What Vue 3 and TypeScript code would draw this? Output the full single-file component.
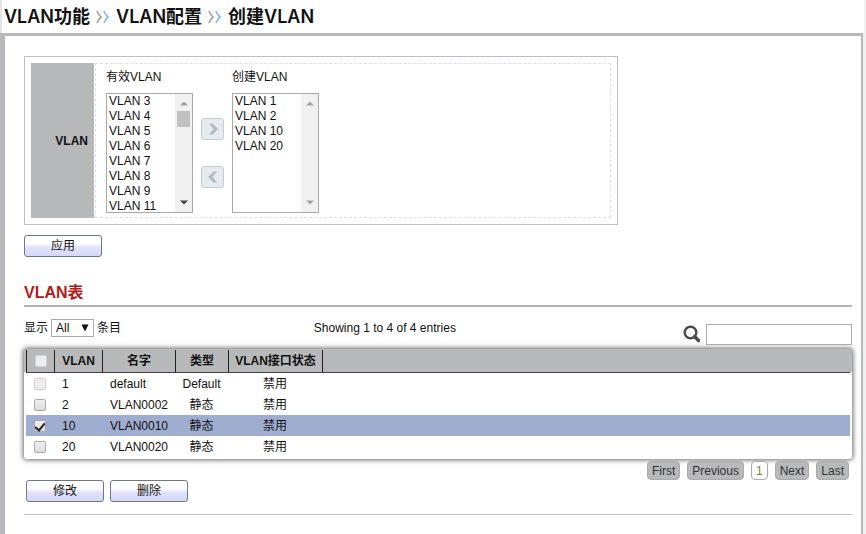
<script setup lang="ts">
import { computed, ref } from 'vue'

interface VlanRow {
  id: number
  name: string
  type: string
  state: string
  locked?: boolean
}

const crumbs = ['VLAN功能', 'VLAN配置', '创建VLAN']

const available = ref<number[]>([3, 4, 5, 6, 7, 8, 9, 11, 12, 13, 14, 15, 16, 17, 18, 19])
const created = ref<number[]>([1, 2, 10, 20])
const pickAvailable = ref<number[]>([])
const pickCreated = ref<number[]>([])

const rows: VlanRow[] = [
  { id: 1, name: 'default', type: 'Default', state: '禁用', locked: true },
  { id: 2, name: 'VLAN0002', type: '静态', state: '禁用' },
  { id: 10, name: 'VLAN0010', type: '静态', state: '禁用' },
  { id: 20, name: 'VLAN0020', type: '静态', state: '禁用' },
]
const checked = ref<number[]>([10])
const keyword = ref('')
const pageSize = ref('All')

const visibleRows = computed(() =>
  rows.filter((r) => `${r.id} ${r.name} ${r.type} ${r.state}`.includes(keyword.value)),
)

const byNumber = (a: number, b: number) => a - b

function addVlans() {
  created.value = [...created.value, ...pickAvailable.value].sort(byNumber)
  available.value = available.value.filter((v) => !pickAvailable.value.includes(v))
  pickAvailable.value = []
}

function removeVlans() {
  available.value = [...available.value, ...pickCreated.value].sort(byNumber)
  created.value = created.value.filter((v) => !pickCreated.value.includes(v))
  pickCreated.value = []
}
</script>

<template>
  <div class="page">
    <header class="crumbs">
      <template v-for="(crumb, i) in crumbs" :key="crumb">
        <svg v-if="i > 0" class="crumb-sep" viewBox="0 0 14 14" aria-hidden="true">
          <path d="M1 1 Q2 4 5 7 Q2 10 1 13" stroke="#a9a9a9" />
          <path d="M8 1 Q9 4 12 7 Q9 10 8 13" stroke="#8dbbf0" />
        </svg>
        <span>{{ crumb }}</span>
      </template>
    </header>

    <main class="content">
      <section class="form-box">
        <div class="form-label">VLAN</div>
        <div class="form-field">
          <div class="list-group">
            <label for="available">有效VLAN</label>
            <div class="list-frame">
              <select id="available" v-model="pickAvailable" multiple>
                <option v-for="v in available" :key="v" :value="v">VLAN {{ v }}</option>
              </select>
              <div class="scrollbar" aria-hidden="true">
                <svg viewBox="0 0 8 5"><path d="M0 4.5 4 0.5 8 4.5z" fill="#a3a3a3" /></svg>
                <span class="thumb"></span>
                <svg viewBox="0 0 8 5"><path d="M0 0.5 4 4.5 8 0.5z" fill="#404040" /></svg>
              </div>
            </div>
          </div>

          <div class="movers">
            <button type="button" aria-label="添加" @click="addVlans">
              <svg viewBox="0 0 12 12"><path d="M2 0.5h3.5l5.5 5.5-5.5 5.5H2L6.5 6z" fill="#b0bcc3" /></svg>
            </button>
            <button type="button" aria-label="移除" @click="removeVlans">
              <svg viewBox="0 0 12 12"><path d="M10 0.5H6.5L1 6l5.5 5.5H10L5.5 6z" fill="#b0bcc3" /></svg>
            </button>
          </div>

          <div class="list-group">
            <label for="created">创建VLAN</label>
            <div class="list-frame">
              <select id="created" v-model="pickCreated" multiple>
                <option v-for="v in created" :key="v" :value="v">VLAN {{ v }}</option>
              </select>
              <div class="scrollbar" aria-hidden="true">
                <svg viewBox="0 0 8 5"><path d="M0 4.5 4 0.5 8 4.5z" fill="#a3a3a3" /></svg>
                <svg viewBox="0 0 8 5"><path d="M0 0.5 4 4.5 8 0.5z" fill="#a3a3a3" /></svg>
              </div>
            </div>
          </div>
        </div>
      </section>

      <button type="button" class="btn">应用</button>

      <h2>VLAN表</h2>

      <div class="toolbar">
        <label class="page-size">
          显示
          <span class="size-select">
            <select v-model="pageSize">
              <option>All</option>
              <option>10</option>
              <option>50</option>
            </select>
            <svg viewBox="0 0 8 8" aria-hidden="true"><path d="M0.5 0.5h7L4 7.5z" fill="#111" /></svg>
          </span>
          条目
        </label>
        <span class="summary">Showing 1 to 4 of 4 entries</span>
        <label class="search">
          <svg viewBox="0 0 18 18" role="img" aria-label="搜索">
            <circle cx="7.5" cy="7.5" r="5.8" fill="none" stroke="#4a4a4a" stroke-width="2.4" />
            <path d="M11.5 11.5 15.5 15.5" stroke="#4a4a4a" stroke-width="3.4" stroke-linecap="round" />
          </svg>
          <input v-model="keyword" type="text" />
        </label>
      </div>

      <div class="table-wrap">
        <table>
          <colgroup>
            <col class="c-check" />
            <col class="c-id" />
            <col class="c-name" />
            <col class="c-type" />
            <col class="c-state" />
            <col />
          </colgroup>
          <thead>
            <tr>
              <th><input type="checkbox" aria-label="全选" disabled /></th>
              <th>VLAN</th>
              <th>名字</th>
              <th>类型</th>
              <th>VLAN接口状态</th>
              <th></th>
            </tr>
          </thead>
          <tbody>
            <tr v-for="r in visibleRows" :key="r.id" :class="{ selected: checked.includes(r.id) }">
              <td class="mid">
                <input
                  v-model="checked"
                  type="checkbox"
                  :value="r.id"
                  :disabled="r.locked"
                  :aria-label="`VLAN ${r.id}`"
                />
              </td>
              <td>{{ r.id }}</td>
              <td>{{ r.name }}</td>
              <td class="mid">{{ r.type }}</td>
              <td class="mid">{{ r.state }}</td>
              <td></td>
            </tr>
          </tbody>
        </table>
      </div>

      <nav class="pager">
        <button type="button">First</button>
        <button type="button">Previous</button>
        <button type="button" class="current">1</button>
        <button type="button">Next</button>
        <button type="button">Last</button>
      </nav>

      <div class="actions">
        <button type="button" class="btn">修改</button>
        <button type="button" class="btn">删除</button>
      </div>
    </main>
  </div>
</template>

<style>
body {
  background: #f0f0f0;
}
</style>

<style scoped>
.page,
.page * {
  box-sizing: border-box;
}

.page {
  display: flex;
  flex-direction: column;
  min-height: 100vh;
  font: 12px/16px 'Liberation Sans', 'Noto Sans CJK SC', sans-serif;
  color: #111;
}

button,
input,
select {
  margin: 0;
  font: inherit;
  color: inherit;
}

.crumbs {
  display: flex;
  align-items: center;
  gap: 6px;
  height: 33px;
  margin-right: 2px;
  padding-left: 2px;
  border-left: 2px solid #e4e4e4;
  background: #fff;
  font: 600 18px/24px Inter, 'Noto Sans CJK SC', sans-serif;
}

.crumb-sep {
  width: 14px;
  height: 14px;
  fill: none;
  stroke-width: 1.8;
}

.content {
  flex: 1;
  margin-right: 3px;
  padding: 20px 9px 20px 19px;
  border: solid #b8b9bb;
  border-width: 3px 2px 0 5px;
  background: #fff;
}

.form-box {
  display: flex;
  gap: 1px;
  width: 594px;
  max-width: 100%;
  padding: 6px;
  border: 1px solid #c0c0c0;
}

.form-label {
  display: flex;
  align-items: center;
  justify-content: flex-end;
  width: 63px;
  padding-right: 6px;
  background: #b8b9bb;
  font-weight: bold;
}

.form-field {
  flex: 1;
  display: flex;
  gap: 8px;
  padding: 5px 10px 4px;
  border: 1px dashed #dedcfb;
}

.list-group {
  display: flex;
  flex-direction: column;
  gap: 8px;
}

.list-frame {
  display: flex;
  width: 87px;
  height: 120px;
  border: 1px solid #aaa;
}

.list-frame select {
  flex: 1;
  min-width: 0;
  padding: 0;
  border: 0;
  outline: 0;
  background: #fff;
  overflow-y: auto;
  scrollbar-width: none;
}

.list-frame option {
  min-height: 15px;
  padding: 0 2px;
  line-height: 14px;
}

.scrollbar {
  display: flex;
  flex-direction: column;
  align-items: center;
  width: 17px;
  padding: 7px 2px;
  background: #f1f1f1;
}

.scrollbar svg {
  width: 8px;
  height: 5px;
}

.scrollbar svg:last-child {
  margin-top: auto;
}

.thumb {
  width: 13px;
  height: 16px;
  margin-top: 5px;
  background: #c1c1c1;
}

.movers {
  display: flex;
  flex-direction: column;
  gap: 26px;
  padding-top: 49px;
}

.movers button {
  display: flex;
  align-items: center;
  justify-content: center;
  width: 23px;
  height: 22px;
  padding: 0;
  border: 1px solid #c3ccd2;
  border-radius: 3px;
  background: #e6ebee;
}

.movers svg {
  width: 12px;
  height: 12px;
}

.btn {
  width: 78px;
  height: 22px;
  padding: 0;
  border: 1px solid #6c7884;
  border-radius: 3px;
  background: linear-gradient(#fff 35%, #e0e1fb 60%, #d6d8fa);
}

.content > .btn {
  display: block;
  margin-top: 10px;
}

h2 {
  margin: 24px 0 0;
  border-bottom: 2px solid #b4b4b4;
  color: #b31b1b;
  font-size: 16px;
  line-height: 24px;
}

.toolbar {
  display: grid;
  grid-template-columns: 35% 1fr auto;
  align-items: center;
  height: 42px;
}

.page-size {
  display: flex;
  align-items: center;
  gap: 3px;
}

.size-select {
  position: relative;
  display: flex;
}

.size-select select {
  appearance: none;
  width: 43px;
  height: 18px;
  padding: 0 4px;
  border: 1px solid #aaa;
  border-radius: 0;
  background: #fff;
}

.size-select svg {
  position: absolute;
  right: 5px;
  top: 5px;
  width: 8px;
  height: 8px;
  pointer-events: none;
}

.search {
  display: flex;
  align-items: center;
  gap: 5px;
  padding-top: 12px;
}

.search svg {
  width: 18px;
  height: 18px;
}

.search input {
  width: 146px;
  height: 21px;
  padding: 0 4px;
  border: 1px solid #aaa;
}

.table-wrap {
  padding: 1px 2px 2px;
  border-radius: 3px;
  background: #fff linear-gradient(#b8b9bb, #b8b9bb) no-repeat 0 0 / 100% 23px;
  box-shadow: 0 0 5px 1px #666;
}

table {
  width: 100%;
  border-collapse: separate;
  border-spacing: 0;
  table-layout: fixed;
}

.c-check {
  width: 28px;
}

.c-id {
  width: 48px;
}

.c-name {
  width: 73px;
}

.c-type {
  width: 53px;
}

.c-state {
  width: 94px;
}

th {
  height: 23px;
  padding: 0;
  border-left: 1px solid #222;
  border-bottom: 1px solid #444;
  white-space: nowrap;
}

td {
  height: 21px;
  padding: 0 0 0 8px;
}

th:first-child,
td.mid {
  padding: 0;
  text-align: center;
}

tr.selected {
  background: #9fadd0;
}

input[type='checkbox'] {
  display: block;
  appearance: none;
  width: 12px;
  height: 12px;
  margin: 0 auto;
  border: 1px solid #aaa;
  border-radius: 2px;
  background: linear-gradient(#f0f0f0, #dcdcdc);
}

input[type='checkbox']:disabled {
  border-color: #d0d0d0;
  background: #eee;
}

input[type='checkbox']:checked::after {
  content: '';
  display: block;
  width: 4px;
  height: 8px;
  margin: 0 auto;
  border: solid #222;
  border-width: 0 2px 2px 0;
  transform: rotate(40deg);
}

.pager {
  display: flex;
  justify-content: flex-end;
  gap: 7px;
  padding: 2px 3px 0 0;
}

.pager button {
  height: 19px;
  padding: 0 4px;
  border: 1px solid #aaa;
  border-radius: 4px;
  background: #b8b9bb;
  color: #333;
}

.pager .current {
  background: #fff;
  color: #8a7a3a;
}

.actions {
  display: flex;
  gap: 6px;
  padding: 0 0 12px 2px;
  border-bottom: 1px solid #c0c0c0;
}
</style>
